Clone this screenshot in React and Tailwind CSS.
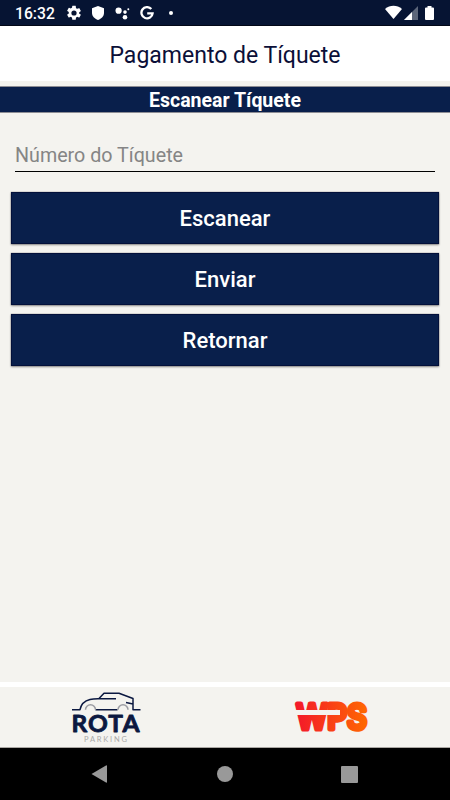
import React from 'react';

const ACTIONS = [
  { id: 'scan', label: 'Escanear' },
  { id: 'send', label: 'Enviar' },
  { id: 'back', label: 'Retornar' },
];

export default function App() {
  return (
    <div className="flex h-[800px] w-[450px] flex-col overflow-hidden bg-[#f4f3ef] font-['Roboto',sans-serif]">
      <StatusBar />
      <header className="flex h-[55px] shrink-0 items-center justify-center bg-white pt-[3px]">
        <h1 className="text-[23px] leading-none text-[#0b0f38]">Pagamento de Tíquete</h1>
      </header>
      <h2 className="mt-[5px] flex h-[27px] shrink-0 items-center justify-center border-y border-[#8d8d94] bg-[#091f4b] pt-[3px] text-[19.5px] leading-none font-bold text-white">
        Escanear Tíquete
      </h2>

      <main className="flex-1 px-[11px] pt-[28px]">
        <input
          placeholder="Número do Tíquete"
          className="mx-[4px] block h-[31px] w-[420px] rounded-none border-b border-black bg-transparent pb-px text-[19.7px] outline-none placeholder:text-[#858585]"
        />
        <div className="mt-[20px] flex flex-col gap-[9px]">
          {ACTIONS.map((a) => (
            <button
              key={a.id}
              className="h-[52px] w-full border border-[#03103a] bg-[#091f4b] pt-[2px] text-[22px] leading-none font-medium text-white shadow-[0_0_1px_rgba(0,0,0,0.5),0_1px_2px_rgba(0,0,0,0.4)]"
            >
              {a.label}
            </button>
          ))}
        </div>
      </main>

      <footer className="flex h-[66px] shrink-0 border-t-[5px] border-b border-t-white border-b-[#aaa7a3]">
        <RotaLogo />
        <WpsLogo />
      </footer>
      <NavBar />
    </div>
  );
}

function StatusBar() {
  return (
    <div className="flex h-[26px] shrink-0 items-center border-b border-[#020817] bg-[#061433] pl-[15px] text-white">
      <span className="w-[51px] pt-[3px] text-[15.7px] leading-none font-medium">16:32</span>
      <svg width="16" height="16" viewBox="1 1 22 22" fill="currentColor" className="mt-px">
        <path d="M19.14 12.94c.04-.3.06-.61.06-.94s-.02-.64-.07-.94l2.03-1.58a.49.49 0 0 0 .12-.61l-1.92-3.32a.49.49 0 0 0-.59-.22l-2.39.96a7 7 0 0 0-1.62-.94l-.36-2.54A.48.48 0 0 0 13.92 2h-3.84a.48.48 0 0 0-.48.41l-.36 2.54a7 7 0 0 0-1.62.94l-2.39-.96a.48.48 0 0 0-.59.22L2.72 8.47a.48.48 0 0 0 .12.61l2.03 1.58c-.05.3-.07.62-.07.94s.02.64.07.94l-2.03 1.58a.49.49 0 0 0-.12.61l1.92 3.32c.12.22.37.29.59.22l2.39-.96c.5.38 1.03.7 1.62.94l.36 2.54c.05.24.24.41.48.41h3.84c.24 0 .44-.17.48-.41l.36-2.54a7 7 0 0 0 1.62-.94l2.39.96c.22.08.47 0 .59-.22l1.92-3.32a.48.48 0 0 0-.12-.61ZM12 15.6a3.6 3.6 0 1 1 0-7.2 3.6 3.6 0 0 1 0 7.2Z" />
      </svg>
      <svg width="12" height="14" viewBox="0 0 12 14" fill="currentColor" className="ml-[10px] mt-px">
        <path d="M6 0 12 2.2V7c0 3-2.5 5.8-6 7-3.5-1.2-6-4-6-7V2.2Z" />
      </svg>
      <svg width="15" height="13" viewBox="0 0 15 13" fill="currentColor" className="ml-[11px] mt-px">
        <circle cx="3.6" cy="3.7" r="3.1" />
        <circle cx="10" cy="5.1" r="1.8" />
        <circle cx="13.3" cy="2.2" r="1" />
        <circle cx="10" cy="10.3" r="2.3" />
      </svg>
      <svg width="14" height="14" viewBox="0 0 14 14" fill="none" stroke="currentColor" strokeWidth="2.3" className="ml-[10px] mt-px">
        <path d="M11.3 3.1A5.6 5.6 0 1 0 12.6 7.3H7.2" />
      </svg>
      <span className="mt-px ml-[15px] size-[4px] rounded-full bg-white" />
      <svg width="50" height="16" viewBox="0 0 50 16" fill="currentColor" className="mt-px ml-auto mr-[15px]">
        <path d="M0 4C5-.4 12-.4 17 4L8.5 14Z" />
        <path d="M33 1v14H19Z" opacity=".35" />
        <path d="M27 7v8H19Z" />
        <path d="M42.5 1h4v1.5H48a1 1 0 0 1 1 1V14a1 1 0 0 1-1 1h-7a1 1 0 0 1-1-1V3.5a1 1 0 0 1 1-1h1.5Z" />
      </svg>
    </div>
  );
}

function RotaLogo() {
  return (
    <svg width="225" height="60" viewBox="0 0 225 60" fill="none">
      <g stroke="#0b1840" strokeWidth="1.5" strokeLinejoin="round">
        <path d="M72 22.7h8c1-5 5-9 10-10.200 3-.7 5-.7 8-.7h18" />
        <path d="M99 11.500l5-5.300h15l14 5.300v5.500l-7-1.500M133 17v5.700h7.500M95.500 22.700h22" />
      </g>
      <g stroke="#9c9da3" strokeWidth="1.5">
        <path d="M85.5 22.7a5 5 0 0 1 10 0" />
        <path d="M118 22.7a5 5 0 0 1 10 0" />
      </g>
      <text
        x="71.5"
        y="44.5"
        textLength="69"
        lengthAdjust="spacingAndGlyphs"
        letterSpacing="1"
        fontFamily="Lato, sans-serif"
        fontSize="22.5"
        fontWeight="700"
        fill="#0b1840"
        stroke="#0b1840"
        strokeWidth=".8"
        strokeLinejoin="round"
      >
        ROTA
      </text>
      <text x="84" y="55" textLength="43" fontFamily="Lato, sans-serif" fontSize="7.5" fill="#aaa9a8">
        PARKING
      </text>
    </svg>
  );
}

function WpsLogo() {
  return (
    <svg width="225" height="60" viewBox="0 0 225 60">
      <defs>
        <linearGradient id="wps" gradientUnits="userSpaceOnUse" x1="69" y1="0" x2="144" y2="0">
          <stop offset="0" stopColor="#f3162b" />
          <stop offset="1" stopColor="#ff6a00" />
        </linearGradient>
      </defs>
      <text
        x="71.5"
        y="42.2"
        textLength="70.5"
        lengthAdjust="spacingAndGlyphs"
        fill="url(#wps)"
        stroke="url(#wps)"
        strokeWidth="5"
        strokeLinejoin="round"
        fontFamily="Inter, sans-serif"
        fontSize="33.5"
        fontWeight="500"
      >
        WPS
      </text>
      {/* slit that runs through the W and into the bowl of the P */}
      <path d="M69 25.5h46" stroke="#f4f3ef" strokeWidth="5" />
    </svg>
  );
}

function NavBar() {
  return (
    <nav className="flex h-[52px] shrink-0 items-center justify-between bg-black pr-[92px] pl-[91px]">
      <svg width="17" height="18" viewBox="0 0 17 18" fill="#999">
        <path d="M.5 9 15 .5q1-.5 1 .5v16q0 1-1 .5Z" />
      </svg>
      <span className="size-[16px] rounded-full bg-[#999]" />
      <span className="size-[17px] rounded-[1px] bg-[#999]" />
    </nav>
  );
}
